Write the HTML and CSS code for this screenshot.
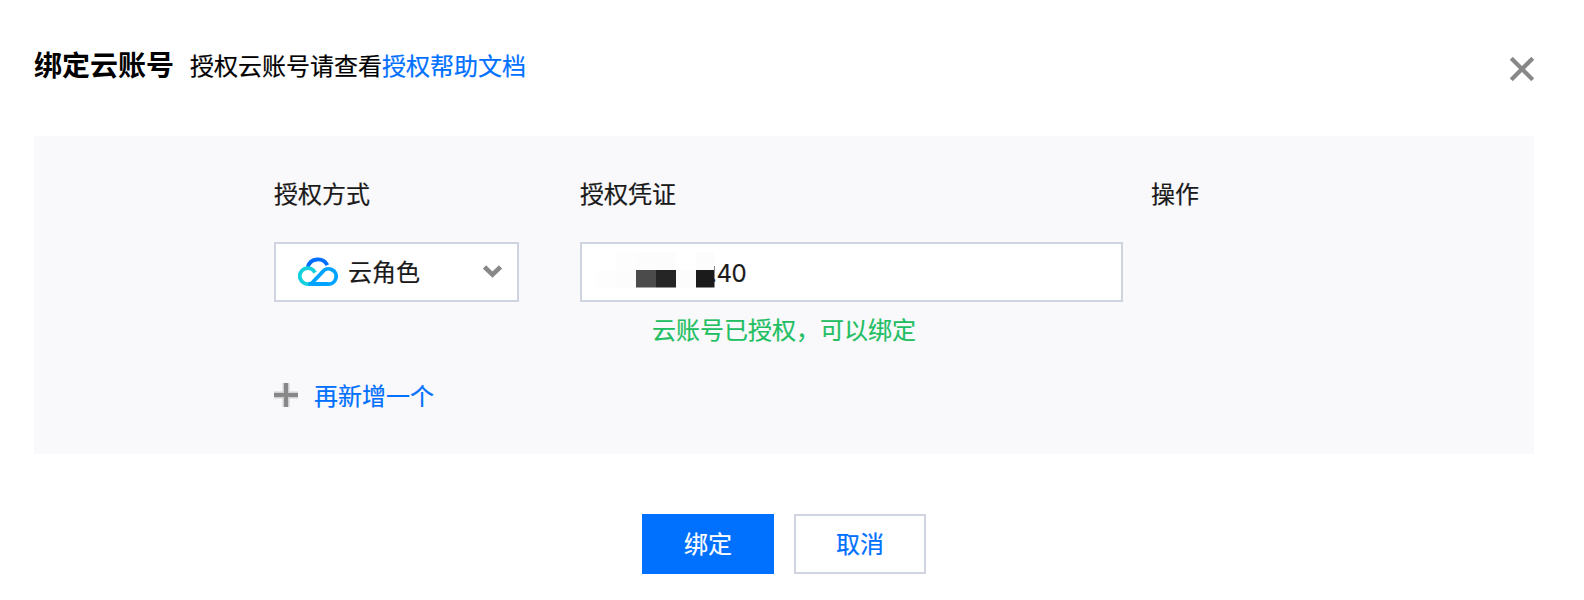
FILE: index.html
```html
<!DOCTYPE html>
<html lang="zh-CN">
<head>
  <meta charset="UTF-8" />
  <meta name="viewport" content="width=device-width, initial-scale=1.0"/>
  <title>绑定云账号</title>
  <link rel="stylesheet" href="styles.css">
</head>
<body>

<div class="dialog">
  <div class="dialog-header">
    <h2>绑定云账号</h2>
    <p class="subtitle">授权云账号请查看<a href="#">授权帮助文档</a></p>
    <button type="button" class="close-btn" aria-label="关闭">
      <svg width="24" height="24" viewBox="0 0 24 24"><path d="M1.3 1.3L22.7 22.7M22.7 1.3L1.3 22.7" stroke="#888" stroke-width="4.2"/></svg>
    </button>
  </div>

  <div class="panel">
    <div class="auth-grid">
      <div class="col-title">授权方式</div>
      <div class="col-title">授权凭证</div>
      <div class="col-title">操作</div>

      <div class="select">
        <svg class="cloud" width="40" height="30" viewBox="0 0 40 30" fill="none" stroke-width="3.8">
          <path d="M9.7 10A10.7 10.7 0 0 1 29.4 8.2" stroke="#006eff"/>
          <path d="M17 15.6A8 8 0 1 0 12.5 26.6" stroke="#13d0dc"/>
          <path d="M13 27L24.2 15.2A7.6 7.6 0 1 1 29.8 27H10.5" stroke="#00a3ff"/>
        </svg>
        <span class="select-text">云角色</span>
        <svg class="arrow" width="19" height="14" viewBox="0 0 19 14" fill="none"><path d="M1.5 2L9.5 9.6L17.5 2" stroke="#888" stroke-width="4.6"/></svg>
      </div>

      <div class="credential">
        <div class="field">
          <!-- masked part of the account id -->
          <svg class="mask" width="119" height="36" viewBox="0 0 119 36">
            <path d="M20 0H40V18H20zM0 18H20V35H0z" fill="#fdfdfd"/>
            <path d="M60 0H80V18H60zM40 0H60V18H40zM100 0H118V18H100zM20 18H40V36H20zM80 18H100V36H80z" fill="#fcfcfc"/>
            <path d="M40 18H60V35.5H40z" fill="#4b4b4b"/>
            <path d="M60 18H80V35.5H60z" fill="#252525"/>
            <path d="M100 18H118.5V35.5H100z" fill="#1b1b1b"/>
            <path d="M118.5 14V18" stroke="#888" stroke-width="1"/>
          </svg>
          <span class="field-text">.40</span>
        </div>
        <p class="tip">云账号已授权，可以绑定</p>
      </div>
    </div>

    <a href="#" class="add-link">
      <svg width="24" height="24" viewBox="0 0 24 24">
        <path d="M12 0V24M0 12H24" stroke="#888" stroke-opacity=".35" stroke-width="7"/>
        <path d="M12 0V24M0 12H24" stroke="#888" stroke-width="4"/>
      </svg>
      <span class="add-text">再新增一个</span>
    </a>
  </div>

  <div class="dialog-footer">
    <button type="button" class="btn btn-primary">绑定</button>
    <button type="button" class="btn">取消</button>
  </div>
</div>

</body>
</html>
```
FILE: styles.css
```css
* {
  margin: 0;
  padding: 0;
  box-sizing: border-box;
  font-family: Inter, "Noto Sans CJK SC", sans-serif;
}

body {
  background: #fff;
  color: #000;
  font-size: 24px;
  line-height: 36px;
  -webkit-text-stroke: 0.2px;
}

a {
  color: #0070ff;
  text-decoration: none;
}

.dialog {
  width: 1584px;
  height: 600px;
  padding: 46px 50px 0 34px;
}

.dialog-header {
  display: flex;
  align-items: flex-start;
  height: 90px;
}

.dialog-header h2 {
  font-size: 28px;
  font-weight: 700;
  line-height: 40px;
  -webkit-text-stroke: 0;
}

.subtitle {
  margin-left: 16px;
  line-height: 42px;
}

.close-btn {
  margin: 11px 0 0 auto;
  width: 24px;
  height: 24px;
  border: none;
  background: none;
  cursor: pointer;
}

.close-btn svg {
  display: block;
}

.panel {
  height: 318px;
  padding: 41px 0 0 240px;
  background: #f9f9fc;
  color: #1a1a1a;
}

.auth-grid {
  display: grid;
  grid-template-columns: 245px 543px auto;
  column-gap: 61px;
}

.col-title {
  height: 65px;
}

/* last column sits closer to the input */
.col-title:nth-child(3) {
  margin-left: -33px;
}

.select,
.field {
  display: flex;
  height: 60px;
  border: 2px solid #cfd5e0;
  background: #fff;
}

.select {
  align-items: center;
  padding: 0 15px 0 22px;
}

.cloud {
  margin-right: 10px;
}

.select-text {
  padding-top: 2px;
}

.arrow {
  margin-left: auto;
}

.field {
  padding: 8px 14px;
}

.mask {
  flex: none;
}

.field-text {
  margin-left: -5px;
  line-height: 43px;
  letter-spacing: -0.5px;
}

.tip {
  padding: 11px 0 0 72px;
  color: #22be62;
}

.add-link {
  display: inline-flex;
  align-items: center;
  gap: 16px;
  margin-top: 28px;
}

.add-text {
  padding-top: 2px;
  margin-bottom: -2px;
}

.dialog-footer {
  display: flex;
  justify-content: center;
  gap: 20px;
  padding: 60px 0 0;
}

.btn {
  width: 132px;
  height: 60px;
  padding-bottom: 3px;
  border: 2px solid #cfd5e0;
  background: #fff;
  color: #0070ff;
  font-size: 24px;
  cursor: pointer;
}

.btn-primary {
  border-color: #0070ff;
  background: #0070ff;
  color: #fff;
}
```
